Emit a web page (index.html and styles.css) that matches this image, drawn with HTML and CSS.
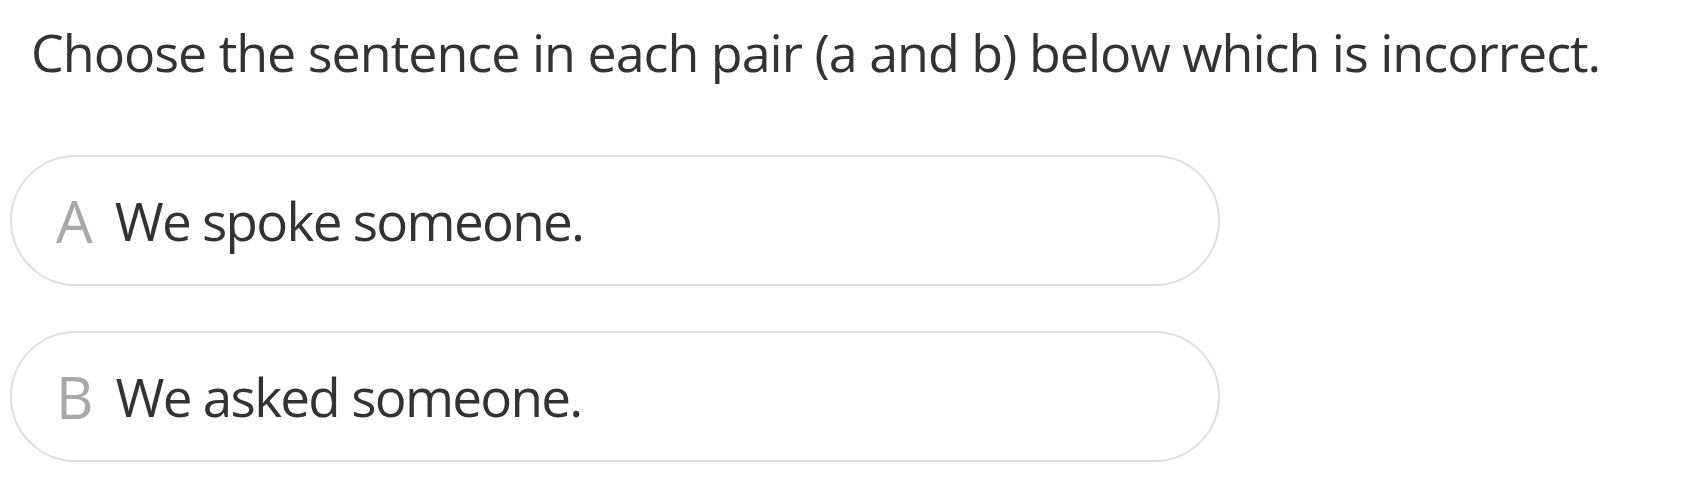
FILE: index.html
```html
<!DOCTYPE html>
<html lang="en">
<head>
<meta charset="utf-8">
<title>Quiz</title>
<link rel="stylesheet" href="styles.css">
</head>
<body>
<main class="quiz">
  <h1 class="question">Choose the sentence in each pair (a and b) below which is incorrect.</h1>
  <div class="options">
    <button class="option" type="button"><span class="label">A</span><span class="text">We spoke someone.</span></button>
    <button class="option" type="button"><span class="label">B</span><span class="text">We asked someone.</span></button>
  </div>
</main>
</body>
</html>
```
FILE: styles.css
```css
html, body {
  margin: 0;
  padding: 0;
  background: #ffffff;
}
.quiz {
  font-family: "Open Sans", "Noto Sans", sans-serif;
  color: #333333;
  padding: 0 0 0 10px;
  width: 1210px;
}
.question {
  margin: 0;
  padding: 16px 0 0 21px;
  font-size: 52px;
  font-weight: 400;
  line-height: 72px;
  white-space: nowrap;
  letter-spacing: -1px;
}
.options {
  display: flex;
  flex-direction: column;
  gap: 45px;
  margin-top: 67px;
}
.option {
  display: flex;
  align-items: center;
  gap: 22px;
  height: 131px;
  box-sizing: border-box;
  border: 2px solid #dedede;
  border-radius: 66px;
  background: #fff;
  padding: 0 0 0 44px;
  font-family: inherit;
  text-align: left;
  cursor: pointer;
}
.label {
  font-size: 58px;
  color: #a8a8a8;
  line-height: 1;
}
.text {
  font-size: 53px;
  color: #333333;
  line-height: 1;
  letter-spacing: -1.7px;
}
```
